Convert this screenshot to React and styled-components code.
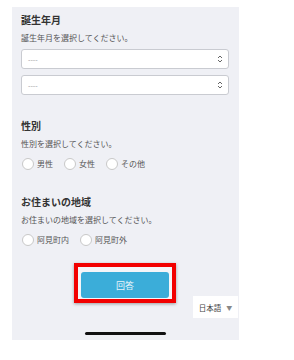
import React from 'react';
import styled, { createGlobalStyle } from 'styled-components';

const GlobalStyle = createGlobalStyle`
  html, body {
    margin: 0;
    padding: 0;
    background: #fff;
  }
  body {
    font-family: "Noto Sans CJK JP", "Noto Sans", sans-serif;
    color: #333;
  }
`;

const Screen = styled.div`
  width: 294px;
  height: 360px;
  padding-top: 7px;
  padding-left: 12px;
  box-sizing: border-box;
`;

const Panel = styled.div`
  position: relative;
  width: 227px;
  padding: 6px 10px 5px 9px;
  box-sizing: border-box;
  background: #eff0f5;
  display: flex;
  flex-direction: column;
`;

const Section = styled.section`
  display: flex;
  flex-direction: column;
  margin-top: ${(p) => p.$top || 0}px;
`;

const Title = styled.h2`
  margin: 0;
  font-size: 10px;
  line-height: 13px;
  font-weight: 700;
  color: #333;
`;

const Hint = styled.p`
  margin: ${(p) => p.$gap}px 0 0;
  font-size: 8px;
  line-height: 12px;
  color: #555;
`;

const SelectBox = styled.div`
  margin-top: ${(p) => p.$top}px;
  height: 20px;
  box-sizing: border-box;
  border: 1px solid #c9cbd1;
  border-radius: 3px;
  background: #fff;
  display: flex;
  align-items: center;
  justify-content: space-between;
  padding: 0 5px 0 6px;
  font-size: 7px;
  color: #999;
`;

const RadioRow = styled.div`
  margin-top: ${(p) => p.$top}px;
  height: 12px;
  display: flex;
  align-items: center;
  gap: 11px;
  padding-left: 1px;
`;

const RadioItem = styled.label`
  display: flex;
  align-items: center;
  gap: 3px;
  font-size: 8px;
  line-height: 12px;
  color: #555;
`;

const Circle = styled.span`
  width: 12px;
  height: 12px;
  box-sizing: border-box;
  border-radius: 50%;
  border: 1px solid #c8c8c8;
  background: #fff;
`;

const Highlight = styled.div`
  align-self: center;
  margin-top: 17px;
  width: 102px;
  height: 40px;
  box-sizing: border-box;
  border: 4px solid #f20000;
  background: #f4f5f8;
  padding: 3px;
  box-shadow: 0 1px 3px rgba(0, 0, 0, 0.35);
`;

const AnswerButton = styled.button`
  width: 100%;
  height: 100%;
  border: none;
  border-radius: 3px;
  background: #3badd9;
  color: #e6f4fa;
  font-family: inherit;
  font-size: 9px;
  padding: 0;
`;

const HomeBar = styled.div`
  align-self: center;
  margin-top: 29px;
  width: 81px;
  height: 3px;
  border-radius: 2px;
  background: #111;
`;

const LangBox = styled.div`
  position: absolute;
  right: 1px;
  top: 289px;
  width: 45px;
  height: 22px;
  background: #fff;
  display: flex;
  align-items: center;
  justify-content: center;
  gap: 5px;
  font-size: 7.5px;
  color: #444;
`;

const Caret = styled.span`
  font-size: 6px;
  color: #888;
`;

const Chevrons = () => (
  <svg width="6" height="8" viewBox="0 0 6 8" fill="none" stroke="#666" strokeWidth="1">
    <path d="M1 3 L3 1 L5 3" />
    <path d="M1 5 L3 7 L5 5" />
  </svg>
);

const Select = ({ top }) => (
  <SelectBox $top={top}>
    <span>----</span>
    <Chevrons />
  </SelectBox>
);

const Radio = ({ label }) => (
  <RadioItem>
    <Circle />
    {label}
  </RadioItem>
);

export default function App() {
  return (
    <>
      <GlobalStyle />
      <Screen>
        <Panel>
          <Section>
            <Title>誕生年月</Title>
            <Hint $gap={6}>誕生年月を選択してください。</Hint>
            <Select top={5} />
            <Select top={6} />
          </Section>

          <Section $top={24}>
            <Title>性別</Title>
            <Hint $gap={6}>性別を選択してください。</Hint>
            <RadioRow $top={7.5}>
              <Radio label="男性" />
              <Radio label="女性" />
              <Radio label="その他" />
            </RadioRow>
          </Section>

          <Section $top={25}>
            <Title>お住まいの地域</Title>
            <Hint $gap={6}>お住まいの地域を選択してください。</Hint>
            <RadioRow $top={8}>
              <Radio label="阿見町内" />
              <Radio label="阿見町外" />
            </RadioRow>
          </Section>

          <Highlight>
            <AnswerButton>回答</AnswerButton>
          </Highlight>

          <HomeBar />

          <LangBox>
            日本語 <Caret>▼</Caret>
          </LangBox>
        </Panel>
      </Screen>
    </>
  );
}
